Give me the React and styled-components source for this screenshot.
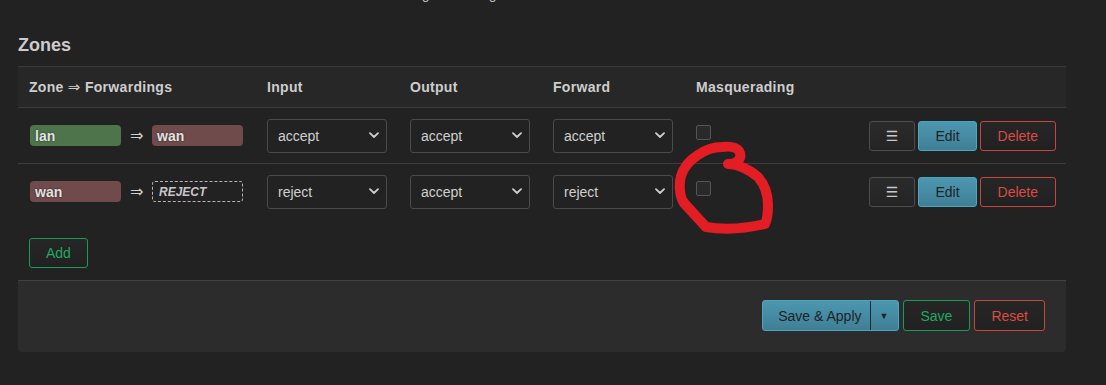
import React from "react";
import styled, { createGlobalStyle, css } from "styled-components";

const GlobalStyle = createGlobalStyle`
  html, body {
    margin: 0;
    padding: 0;
    background: #222222;
  }
  body {
    font-family: "Liberation Sans", Arial, "DejaVu Sans", sans-serif;
    font-size: 14px;
    color: #cfcfcf;
  }
  * { box-sizing: border-box; }
`;

const Page = styled.div`
  position: relative;
  width: 1106px;
  height: 385px;
  overflow: hidden;
  padding: 0 40px 0 18px;
`;

const Desc = styled.div`
  margin-top: -14px;
  padding-left: 250px;
  line-height: 16px;
  font-size: 14px;
  color: #bdbdbd;
  white-space: nowrap;
`;

const Title = styled.h3`
  margin: 33px 0 11px;
  font-size: 18px;
  line-height: 20px;
  font-weight: bold;
  color: #cccccc;
`;

const Table = styled.div`
  width: 1048px;
  border-top: 1px solid #3a3a3a;
`;

const gridCols = css`
  display: grid;
  grid-template-columns: 238px 143px 143px 143px 1fr auto;
  align-items: center;
`;

const HeadRow = styled.div`
  ${gridCols};
  height: 41px;
  background: #272727;
  border-bottom: 1px solid #3d3d3d;
`;

const HeadCell = styled.div`
  padding-left: 11px;
  font-weight: bold;
  font-size: 14px;
  letter-spacing: 0.3px;
  color: #cdcdcd;
  white-space: nowrap;
`;

const HeadArrow = styled.span`
  font-family: "DejaVu Sans", sans-serif;
  font-weight: normal;
  font-size: 15px;
`;

const Row = styled.div`
  ${gridCols};
  height: ${(p) => (p.$last ? "55px" : "56px")};
  border-bottom: ${(p) => (p.$last ? "none" : "1px solid #3d3d3d")};
`;

const Cell = styled.div`
  padding-left: 11px;
  display: flex;
  align-items: center;
`;

const ZoneCell = styled(Cell)`
  padding-left: 12px;
  gap: 9px;
`;

const Badge = styled.span`
  display: inline-flex;
  align-items: center;
  width: 91px;
  height: 21px;
  padding-left: 5px;
  border-radius: 4px;
  font-weight: bold;
  font-size: 14px;
  color: #e2e2e2;
  text-shadow: 0 0 2px rgba(0, 0, 0, 0.6);
  background: ${(p) => (p.$zone === "lan" ? "#4d744b" : "#6f4b4b")};
`;

const TargetBadge = styled.span`
  display: inline-flex;
  align-items: center;
  width: 91px;
  height: 21px;
  padding-left: 6px;
  border: 1px dashed #b5b5b5;
  border-radius: 3px;
  font-weight: bold;
  font-style: italic;
  font-size: 12px;
  color: #c8c8c8;
`;

const Arrow = styled.span`
  font-family: "DejaVu Sans", sans-serif;
  font-size: 16px;
  line-height: 1;
  color: #cfcfcf;
  width: 13px;
  text-align: center;
`;

const Select = styled.div`
  width: 120px;
  height: 34px;
  display: flex;
  align-items: center;
  justify-content: space-between;
  padding: 0 7px 0 10px;
  border: 1px solid #4a4a4a;
  border-radius: 3px;
  background: #222222;
  color: #cfcfcf;
  font-size: 14px;
`;

const Checkbox = styled.span`
  display: block;
  width: 15px;
  height: 15px;
  margin-bottom: 6px;
  border: 1px solid #555555;
  border-radius: 2px;
  background: #2a2a2a;
`;

const Actions = styled.div`
  display: flex;
  align-items: center;
  gap: 3px;
  padding-right: 10px;
`;

const variants = {
  plain: css`
    border-color: #4d4d4d;
    color: #cccccc;
    background: linear-gradient(#2b2b2b, #242424);
  `,
  primary: css`
    border-color: #4ea5c2;
    color: #1f2326;
    background: linear-gradient(#4c97b0, #3f7f96);
  `,
  negative: css`
    border-color: #c8463f;
    color: #dc4b45;
    background: linear-gradient(#262626, #212121);
  `,
  positive: css`
    border-color: #1b9a5a;
    color: #22a862;
    background: linear-gradient(#262626, #212121);
  `,
};

const Button = styled.button`
  height: ${(p) => (p.$tall ? "31px" : "30px")};
  padding: 0 ${(p) => p.$pad || 16}px;
  border: 1px solid;
  border-radius: 3px;
  font-family: "Liberation Sans", Arial, sans-serif;
  font-size: 14px;
  line-height: 1;
  cursor: pointer;
  ${(p) => variants[p.$variant || "plain"]};
`;

const MenuGlyph = styled.span`
  font-family: "DejaVu Sans", sans-serif;
  font-size: 14px;
  color: #c8c8c8;
`;

const AddArea = styled.div`
  padding: 19px 0 12px 11px;
`;

const Footer = styled.div`
  width: 1048px;
  height: 72px;
  display: flex;
  justify-content: flex-end;
  align-items: center;
  gap: 4px;
  padding: 0 21px 2px 0;
  background: #2c2c2c;
  border-top: 1px solid #404040;
  border-radius: 0 0 4px 4px;
`;

const SplitButton = styled.div`
  display: flex;
  height: 31px;
  border: 1px solid #4ea5c2;
  border-radius: 3px;
  background: linear-gradient(#4c97b0, #3f7f96);
  color: #1f2326;
`;

const SplitMain = styled.span`
  display: flex;
  align-items: center;
  padding: 0 8px 0 15px;
  border-right: 1px solid #1d2a30;
  font-size: 14px;
`;

const SplitToggle = styled.span`
  display: flex;
  align-items: center;
  justify-content: center;
  width: 27px;
  font-size: 9px;
`;

const Annotation = styled.svg`
  position: absolute;
  left: 0;
  top: 0;
  pointer-events: none;
`;

function Chevron() {
  return (
    <svg width="10" height="7" viewBox="0 0 10 7">
      <path d="M1 1.2 L5 5 L9 1.2" fill="none" stroke="#cfcfcf" strokeWidth="1.8" strokeLinecap="round" strokeLinejoin="round" />
    </svg>
  );
}

const zones = [
  { name: "lan", dest: "wan", input: "accept", output: "accept", forward: "accept" },
  { name: "wan", dest: null, input: "reject", output: "accept", forward: "reject" },
];

export default function App() {
  return (
    <>
      <GlobalStyle />
      <Page>
        <Desc>Software based offloading for routing/NAT</Desc>
        <Title>Zones</Title>
        <Table>
          <HeadRow>
            <HeadCell>Zone <HeadArrow>⇒</HeadArrow> Forwardings</HeadCell>
            <HeadCell>Input</HeadCell>
            <HeadCell>Output</HeadCell>
            <HeadCell>Forward</HeadCell>
            <HeadCell>Masquerading</HeadCell>
            <HeadCell />
          </HeadRow>
          {zones.map((z, i) => (
            <Row key={z.name} $last={i === zones.length - 1}>
              <ZoneCell>
                <Badge $zone={z.name}>{z.name}</Badge>
                <Arrow>⇒</Arrow>
                {z.dest ? <Badge $zone={z.dest}>{z.dest}</Badge> : <TargetBadge>REJECT</TargetBadge>}
              </ZoneCell>
              <Cell>
                <Select>{z.input}<Chevron /></Select>
              </Cell>
              <Cell>
                <Select>{z.output}<Chevron /></Select>
              </Cell>
              <Cell>
                <Select>{z.forward}<Chevron /></Select>
              </Cell>
              <Cell>
                <Checkbox />
              </Cell>
              <Actions>
                <Button $variant="plain" $pad={16}><MenuGlyph>☰</MenuGlyph></Button>
                <Button $variant="primary" $pad={16}>Edit</Button>
                <Button $variant="negative" $pad={17}>Delete</Button>
              </Actions>
            </Row>
          ))}
          <AddArea>
            <Button $variant="positive" $pad={16}>Add</Button>
          </AddArea>
        </Table>
        <Footer>
          <SplitButton>
            <SplitMain>Save &amp; Apply</SplitMain>
            <SplitToggle>▼</SplitToggle>
          </SplitButton>
          <Button $variant="positive" $pad={17} $tall>Save</Button>
          <Button $variant="negative" $pad={16} $tall>Reset</Button>
        </Footer>
        <Annotation width="1106" height="385" viewBox="0 0 1106 385">
          <path
            d="M728,164 C738,164 750,170 758,177 C765,185 768,195 768,205 C768,213 767,220 765,224 C748,228 725,230 706,227 L684,203 C679,196 679,183 681,176 C684,166 690,160 698,155 C705,150 713,147 722,147 C730,146 736,147 739,151 C742,156 740,160 735,163 C732,164 730,164 728,164"
            fill="none"
            stroke="#e31d24"
            strokeWidth="10"
            strokeLinecap="round"
            strokeLinejoin="round"
          />
        </Annotation>
      </Page>
    </>
  );
}
